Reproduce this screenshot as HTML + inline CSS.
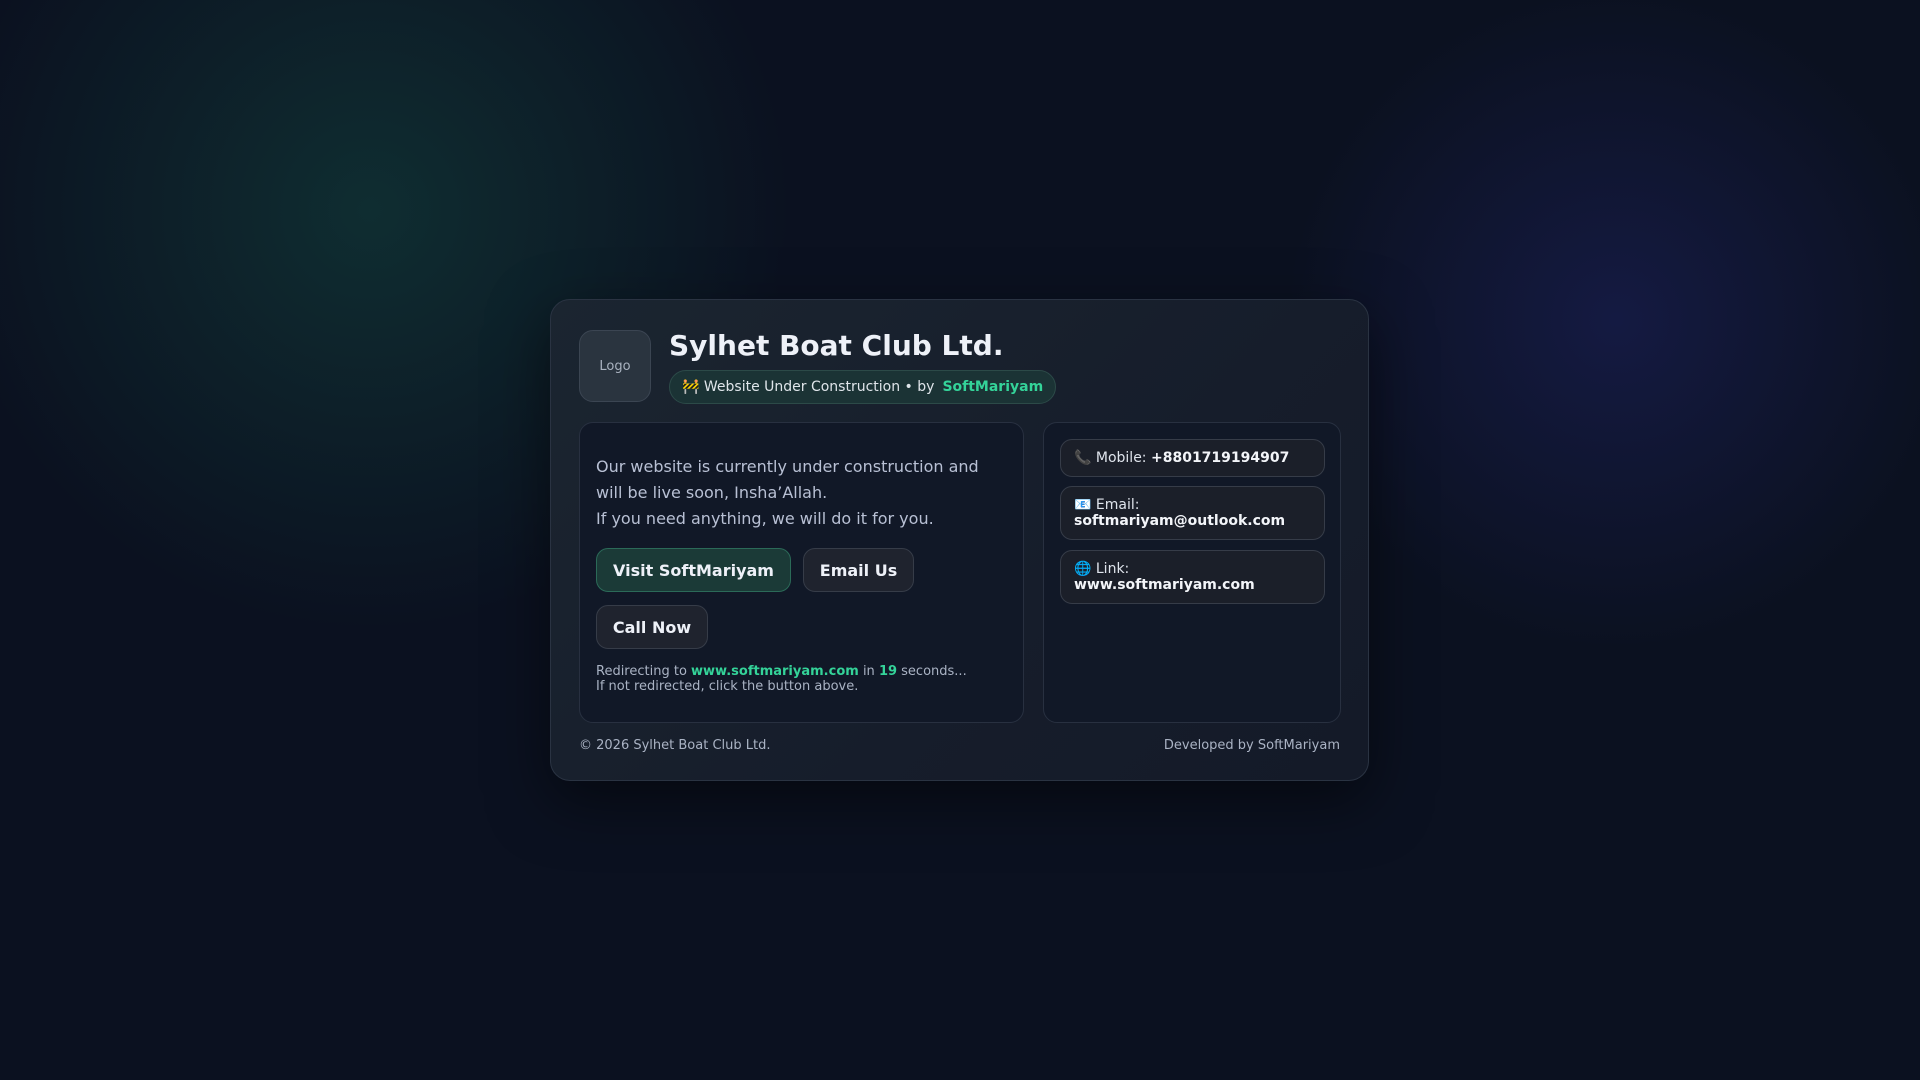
<!DOCTYPE html>
<html><head><meta charset="utf-8"><style>
*{box-sizing:border-box;margin:0;padding:0}
html,body{width:1920px;height:1080px;overflow:hidden}
body{font-family:"DejaVu Sans","Liberation Sans",sans-serif;color:#e5e7eb;
background:radial-gradient(circle at 370px 210px,rgba(20,80,70,.45),rgba(20,80,70,0) 420px),
radial-gradient(circle at 1616px 320px,rgba(30,35,100,.5),rgba(30,35,100,0) 330px),#0b1120;position:relative}
.card{position:absolute;left:550px;top:299px;width:819px;height:482px;border:1px solid #2a3342;border-radius:20px;
background:linear-gradient(135deg,#1b2530,#161d2b 60%,#141a28);box-shadow:0 20px 60px rgba(0,0,0,.5)}
.logo{position:absolute;left:28px;top:30px;width:72px;height:72px;border-radius:14px;background:#2a343f;border:1px solid #3b4552;
font-size:13px;color:#aab3c0;display:flex;align-items:center;justify-content:center}
h1{position:absolute;left:118px;top:29px;font-size:28px;font-weight:bold;color:#eef1f8;white-space:nowrap}
.badge{position:absolute;left:118px;top:70px;height:34px;padding:0 12px;border-radius:17px;background:#1b3335;border:1px solid #2c4a48;
font-size:14px;color:#dfe5ea;display:flex;align-items:center;white-space:nowrap}
.badge b{color:#34d399;margin-left:8px}
.panel{position:absolute;top:122px;height:301px;border:1px solid #283040;border-radius:14px;background:#111827}
.left{left:28px;width:445px}.right{left:492px;width:298px}
.txt{position:absolute;left:16px;top:31px;font-size:16px;line-height:26px;color:#b8c0d4;white-space:nowrap}
.btn{position:absolute;height:44px;border-radius:12px;border:1px solid #363c48;background:#1f232e;color:#eef1f8;font-weight:bold;font-size:16px;
display:flex;align-items:center;justify-content:center}
.red{position:absolute;left:16px;top:241px;font-size:13px;line-height:15px;color:#aab3c4;white-space:nowrap}
.red b{color:#34d399}
.item{position:absolute;left:16px;width:265px;border:1px solid #363c48;border-radius:12px;background:#1b1f29;font-size:14px;line-height:16px;padding:0 13px;color:#dfe4ec;display:flex;flex-direction:column;justify-content:center}
.item b{color:#f3f5f9}
.foot{position:absolute;top:438px;font-size:13px;color:#aab3c4}
</style></head><body>
<div class="card">
<div class="logo">Logo</div>
<h1>Sylhet Boat Club Ltd.</h1>
<div class="badge">🚧 Website Under Construction • by <b>SoftMariyam</b></div>
<div class="panel left">
<div class="txt">Our website is currently under construction and<br>will be live soon, Insha’Allah.<br>If you need anything, we will do it for you.</div>
<div class="btn" style="left:16px;top:125px;width:195px;background:#1b3a37;border-color:#2b6a58">Visit SoftMariyam</div>
<div class="btn" style="left:223px;top:125px;width:111px">Email Us</div>
<div class="btn" style="left:16px;top:182px;width:112px">Call Now</div>
<div class="red">Redirecting to <b>www.softmariyam.com</b> in <b>19</b> seconds...<br>If not redirected, click the button above.</div>
</div>
<div class="panel right">
<div class="item" style="top:16px;height:38px;flex-direction:row;justify-content:flex-start;align-items:center">📞&nbsp;Mobile:&nbsp;<b>+8801719194907</b></div>
<div class="item" style="top:63px;height:54px">
<span>📧 Email:</span><b>softmariyam@outlook.com</b></div>
<div class="item" style="top:127px;height:54px">
<span>🌐 Link:</span><b>www.softmariyam.com</b></div>
</div>
<div class="foot" style="left:28px">© 2026 Sylhet Boat Club Ltd.</div>
<div class="foot" style="right:28px">Developed by SoftMariyam</div>
</div>
</body></html>
